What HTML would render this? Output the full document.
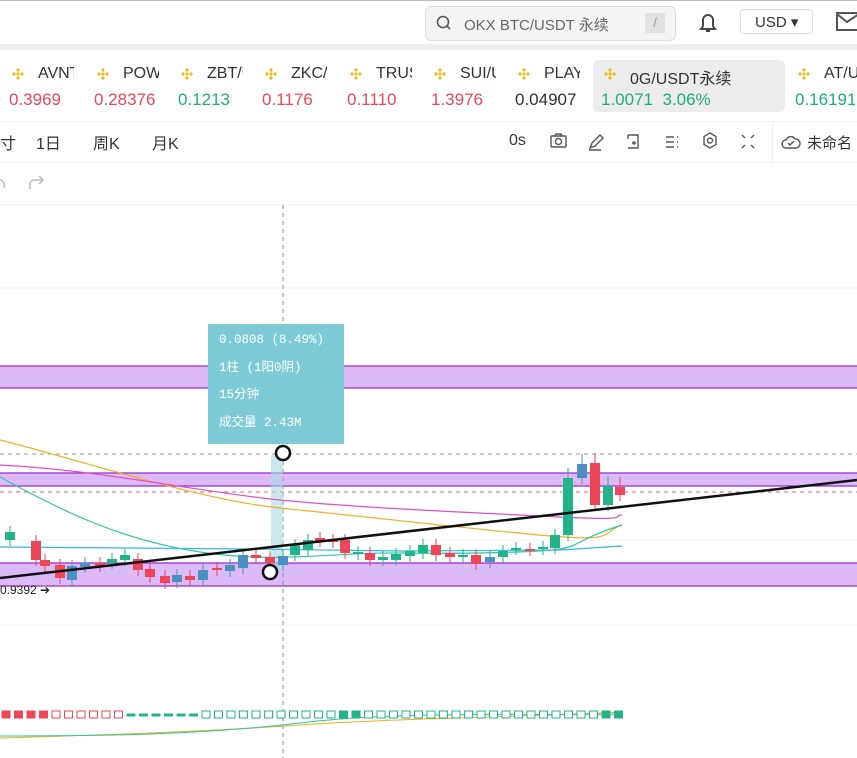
<!DOCTYPE html>
<html><head><meta charset="utf-8"><style>
body{margin:0;width:857px;height:758px;overflow:hidden;background:#fff;font-family:"Liberation Sans","Noto Sans CJK SC",sans-serif;position:relative}
.a{position:absolute;white-space:nowrap}
.r{color:#e8485a}.g{color:#1fad7e}
</style></head><body>
<div class="a" style="left:0;top:0;width:857px;height:1px;background:#bbb"></div>
<div class="a" style="left:0;top:44px;width:857px;height:6px;background:#eee"></div>
<div class="a" style="left:425px;top:6px;width:249px;height:33px;background:#f4f4f4;border:1px solid #ddd;border-radius:6px"></div>
<svg class="a" style="left:436px;top:15px" width="16" height="16"><circle cx="7" cy="7" r="5.5" fill="none" stroke="#555" stroke-width="1.6"/><path d="M11 11l3 3" stroke="#555" stroke-width="1.6"/></svg>
<div class="a" style="left:464px;top:14px;font-size:15px;color:#666">OKX BTC/USDT 永续</div>
<div class="a" style="left:645px;top:13px;width:20px;height:20px;background:#e2e2e2;color:#999;font-size:13px;text-align:center;line-height:20px">/</div>
<svg class="a" style="left:697px;top:11px" width="22" height="24"><path d="M4 18h14l-2-3V9a5 5 0 0 0-10 0v6z" fill="none" stroke="#444" stroke-width="2"/><path d="M9 20h4" stroke="#444" stroke-width="2"/></svg>
<div class="a" style="left:740px;top:9px;width:73px;height:25px;border:1px solid #ddd;border-radius:4px;font-size:15px;color:#333;line-height:25px;padding-left:14px;box-sizing:border-box">USD ▾</div>
<svg class="a" style="left:836px;top:12px" width="22" height="20"><rect x="1" y="1" width="24" height="17" fill="none" stroke="#555" stroke-width="2"/><path d="M1 2l10 8 12-8" fill="none" stroke="#555" stroke-width="2"/></svg>

<div class="a" style="left:593px;top:60px;width:192px;height:52px;background:#ececec;border-radius:5px"></div>
<div id="tk"></div>
<div class="a" style="left:0;top:121px;width:857px;height:1px;background:#eee"></div>
<div class="a" style="left:0;top:130px;font-size:16px;color:#333">寸</div>
<div class="a" style="left:36px;top:130px;font-size:16px;color:#333">1日</div>
<div class="a" style="left:93px;top:130px;font-size:16px;color:#333">周K</div>
<div class="a" style="left:152px;top:130px;font-size:16px;color:#333">月K</div>
<div class="a" style="left:509px;top:132px;font-size:16px;color:#333">0s</div>
<svg class="a" style="left:548px;top:131px" width="210" height="22" fill="none" stroke="#555" stroke-width="1.4">
<rect x="3" y="5" width="15" height="11" rx="1"/><circle cx="10.5" cy="10.5" r="3"/><path d="M7 5l1-2h5l1 2"/>
<path d="M42 17l2-5 8-8 3 3-8 8zM41 19h12"/>
<path d="M80 4h10v13h-10M80 4v4M84 12h4M86 10v4"/>
<path d="M118 6h8M118 11h8M118 16h8M129 6h1M129 11h1M129 16h1"/>
<path d="M162 2l6 3.5v8l-6 3.5-6-3.5v-8z"/><circle cx="162" cy="9.5" r="2.5"/>
<path d="M194 4l3 3M206 4l-3 3M194 17l3-3M206 17l-3-3"/>
</svg>
<div class="a" style="left:772px;top:122px;width:1px;height:40px;background:#eee"></div>
<svg class="a" style="left:781px;top:133px" width="20" height="18"><path d="M5 15a4 4 0 0 1 0-8 5 5 0 0 1 9-1 4 4 0 0 1 1 9z" fill="none" stroke="#555" stroke-width="1.4"/><path d="M7 10l2 2 4-4" fill="none" stroke="#555" stroke-width="1.4"/></svg>
<div class="a" style="left:807px;top:132px;font-size:15px;color:#333">未命名</div>
<div class="a" style="left:0;top:162px;width:857px;height:1px;background:#eee"></div>
<svg class="a" style="left:0;top:172px" width="50" height="20" fill="none" stroke="#bbb" stroke-width="1.5"><path d="M0 8a6 6 0 0 1 4 8"/><path d="M30 17v-5a4 4 0 0 1 4-4h9M39 4l4 4-4 4"/></svg>
<div class="a" style="left:0;top:204px;width:857px;height:1px;background:#f2f2f2"></div>

<svg class="a" style="left:0;top:205px" width="857" height="553" viewBox="0 205 857 553" id="ch">
<g stroke="#f3f3f3"><path d="M0 288H857M0 372H857M0 540H857M0 625H857"/></g>
<g fill="#dcbaf7" stroke="#9b30d0" stroke-width="1.3"><rect x="-2" y="366" width="862" height="22"/><rect x="-2" y="473" width="862" height="13"/><rect x="-2" y="563" width="862" height="23"/></g>
<path d="M0 454H857" stroke="#999" stroke-dasharray="4 4"/>
<path d="M0 492H857" stroke="#e06070" stroke-dasharray="4 4"/>
<path d="M283 205V758" stroke="#888" stroke-dasharray="4 4"/>
<rect x="271" y="455" width="12" height="115" fill="#a8d8e4" opacity=".6"/>
<g fill="none" stroke-width="1.2">
<path d="M0 440C80 460 200 500 280 508S480 530 550 536 600 532 622 525" stroke="#f0b020"/>
<path d="M0 465C100 470 200 492 280 500S480 513 560 517 610 515 622 515" stroke="#e050c0"/>
<path d="M0 477C60 510 120 540 200 552S330 552 400 553 540 552 560 549 580 538 622 525" stroke="#2ec8a0"/>
<path d="M0 547L250 549 400 551 560 550 622 546" stroke="#38b8e0"/>
</g>
<g id="cd"></g>
<path d="M0 578L857 480" stroke="#111" stroke-width="2.5"/>
<circle cx="283" cy="453" r="7" fill="#fff" stroke="#111" stroke-width="2.5"/>
<circle cx="270" cy="572" r="7" fill="#fff" stroke="#111" stroke-width="2.5"/>
<text x="0" y="594" font-size="12" fill="#222" font-family="Liberation Sans">0.9392 ➔</text>
<g fill="none" stroke-width="1"><path d="M0 738C100 735 200 732 300 725S500 718 622 712" stroke="#f0b020"/><path d="M0 736C100 736 200 735 300 723S500 716 622 714" stroke="#2ec8a0"/></g>
<g id="vol"></g>
</svg>

<div class="a" style="left:208px;top:324px;width:136px;height:120px;background:#7ccbd6"></div>
<div class="a" style="left:219px;top:327px;font-family:'Liberation Mono','Noto Sans CJK SC',monospace;font-size:12.5px;color:#fff;line-height:27.5px">0.0808 (8.49%)<br>1柱 (1阳0阴)<br>15分钟<br>成交量 2.43M</div>

<script>
var t=[["AVNT","0.3969","r",11],["POW","0.28376","r",96],["ZBT/U","0.1213","g",180],["ZKC/","0.1176","r",264],["TRUS","0.1110","r",349],["SUI/U","1.3976","r",433],["PLAY","0.04907","k",517],["0G/USDT永续","1.0071&nbsp;&nbsp;3.06%","g",603],["AT/U","0.16191","g",797]];
var h="";t.forEach(function(a,i){var w=i==7?180:(i==8?60:70);
h+='<svg class="a" style="left:'+a[3]+'px;top:67px" width="14" height="14"><path d="M7 1l2 2-2 2-2-2zM7 9l2 2-2 2-2-2zM3 5l2 2-2 2-2-2zM11 5l2 2-2 2-2-2zM7 5l2 2-2 2-2-2z" fill="#f0b90b"/></svg>';
h+='<div class="a" style="left:'+(a[3]+27)+'px;top:65px;width:'+(i==7?150:36)+'px;overflow:hidden;font-size:16px;color:#333">'+a[0]+'</div>';
h+='<div class="a '+a[2]+'" style="left:'+(a[3]-2)+'px;top:90px;width:'+w+'px;overflow:hidden;font-size:17px;'+(a[2]=="k"?"color:#333":"")+'">'+a[1]+'</div>';});
document.getElementById("tk").innerHTML=h;
var c=[[10,532,540,'g'],[36,541,560,'r'],[45,560,566,'r'],[60,565,578,'r'],[72,566,580,'b'],[85,563,567,'b'],[100,563,566,'r'],[112,559,563,'g'],[125,555,560,'g'],[138,559,570,'r'],[150,569,577,'r'],[165,576,583,'r'],[177,575,582,'b'],[190,576,580,'r'],[203,570,580,'b'],[217,568,570,'r'],[230,565,571,'b'],[243,555,568,'b'],[256,555,558,'r'],[270,557,563,'r'],[283,556,565,'b'],[295,545,555,'g'],[308,540,550,'g'],[320,538,541,'r'],[333,540,542,'r'],[345,540,553,'r'],[358,552,554,'g'],[370,553,560,'r'],[383,557,560,'g'],[396,554,560,'g'],[410,551,556,'g'],[423,545,553,'g'],[436,545,555,'r'],[450,553,557,'r'],[463,555,557,'g'],[476,555,564,'r'],[490,557,562,'b'],[503,551,557,'g'],[516,548,549,'g'],[530,549,550,'r'],[543,547,549,'g'],[555,535,548,'g'],[568,478,535,'g'],[582,464,478,'b'],[595,463,505,'r'],[608,486,505,'g'],[620,487,495,'r']];
var col={g:'#22b38a',r:'#ec4658',b:'#4a90c2'},s="",v="";
c.forEach(function(d,i){var k=col[d[3]];s+='<line x1="'+d[0]+'" x2="'+d[0]+'" y1="'+(d[1]-(i>41?10:6))+'" y2="'+(d[2]+6)+'" stroke="'+k+'"/><rect x="'+(d[0]-5)+'" y="'+d[1]+'" width="10" height="'+Math.max(2,d[2]-d[1])+'" fill="'+k+'"/>';});
for(var x=2;x<625;x+=12.5){var red=x<120,k=red?'#ec4658':'#22b38a';var fill=(x<40||x>330&&x<360||x>590)?k:(x>120&&x<200?k:'#fff');v+='<rect x="'+x+'" y="'+(x>120&&x<200?714:711)+'" width="8" height="'+(x>120&&x<200?2:7)+'" fill="'+fill+'" stroke="'+k+'" stroke-width="1"/>';}
document.getElementById("cd").innerHTML=s;document.getElementById("vol").innerHTML=v;
</script>
</body></html>
